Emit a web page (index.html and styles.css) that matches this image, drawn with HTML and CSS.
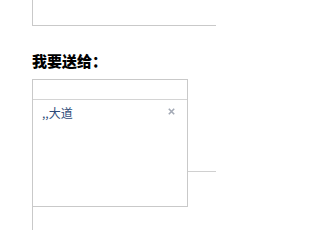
FILE: index.html
```html
<!DOCTYPE html>
<html lang="zh">
<head>
<meta charset="utf-8">
<title>我要送给</title>
<link rel="stylesheet" href="styles.css">
</head>
<body>
<div class="page">
  <div class="top-box"></div>
  <h2 class="heading">我要送给：</h2>
  <div class="row">
    <div class="recipients">
      <div class="rec-head"></div>
      <div class="rec-item">
        <span class="rec-name">,,大道</span>
        <svg class="rec-del" width="7" height="7" viewBox="0 0 7 7"><path d="M0.8 0.8 L6.2 6.2 M6.2 0.8 L0.8 6.2" stroke="#a3a9b5" stroke-width="1.6"/></svg>
      </div>
    </div>
    <div class="side"></div>
  </div>
  <div class="bottom-box"></div>
</div>
</body>
</html>
```
FILE: styles.css
```css
html, body {
  margin: 0;
  padding: 0;
  background: #fff;
  overflow: hidden;
}
body {
  width: 216px;
  height: 230px;
  font-family: "Noto Sans CJK SC", "Liberation Sans", sans-serif;
}
.page {
  padding-left: 32px;
  display: flex;
  flex-direction: column;
}
.top-box {
  height: 25px;
  width: 300px;
  border-left: 1px solid #c9c9c9;
  border-bottom: 1px solid #c9c9c9;
}
.heading {
  margin: 24px 0 8px 0;
  font-size: 15px;
  line-height: 21px;
  font-weight: 900;
  color: #000;
}
.row {
  display: flex;
}
.recipients {
  width: 154px;
  height: 126px;
  border: 1px solid #c9c9c9;
  flex: none;
}
.rec-head {
  height: 19px;
  border-bottom: 1px solid #d4d4d4;
}
.rec-item {
  display: flex;
  align-items: center;
  justify-content: space-between;
  padding: 4px 12px 0 9px;
  height: 18px;
}
.rec-name {
  font-size: 12px;
  line-height: 18px;
  color: #2d4a78;
}
.rec-del {
  display: block;
  margin-top: -3px;
}
.side {
  flex: 1;
  margin-top: 92px;
  height: 0;
  border-top: 1px solid #d0d0d0;
}
.bottom-box {
  height: 40px;
  border-left: 1px solid #c9c9c9;
}
```
